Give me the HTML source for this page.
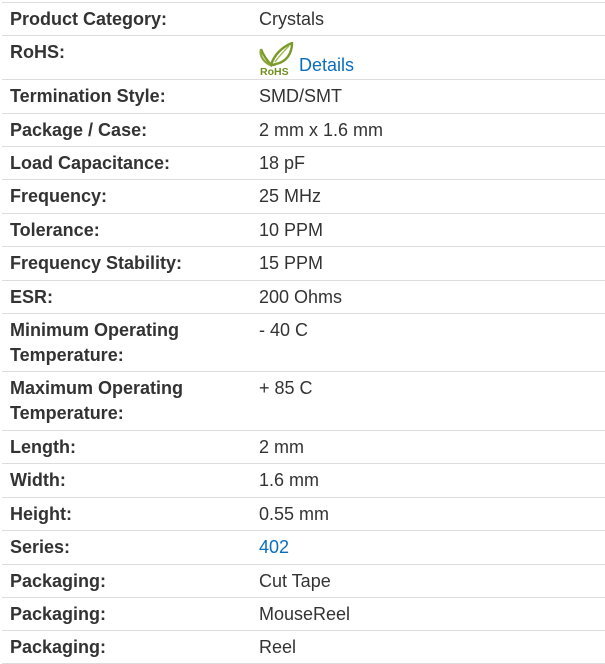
<!DOCTYPE html>
<html><head><meta charset="utf-8"><style>
body{margin:0;background:#fff;font-family:"Liberation Sans",Arial,sans-serif;font-size:18px;color:#333;}
.wrap{position:relative;width:605px;height:664px;}
.r{position:absolute;left:2px;right:0;border-top:1px solid #ddd;box-sizing:border-box;}
.l{position:absolute;left:8px;top:4px;line-height:25px;font-weight:bold;color:#333;width:240px;}
.v{position:absolute;left:257px;top:4px;line-height:25px;}
a{color:#0a6ebd;text-decoration:none;}
</style></head><body><div class="wrap">
<div class="r" style="top:2px;height:33px"><div class="l">Product Category:</div><div class="v">Crystals</div></div>
<div class="r" style="top:35px;height:44px"><div class="l">RoHS:</div>
<div style="position:absolute;left:256px;top:6px;width:36px;height:34px">
<svg width="36" height="34" viewBox="0 0 36 34"><path d="M3 7 C5 13 9 18 13 23 C16 13 24 5 34 1 C34 12 28 20 18 22 C16 23 14 23 13 23" fill="none" stroke="#7a9a2a" stroke-width="2.4"/><path d="M3 7 C1 14 6 20 12 23" fill="none" stroke="#8aa63a" stroke-width="2.2"/><path d="M17 20 C22 13 27 8 31 4" fill="none" stroke="#9bb84a" stroke-width="1.3"/><text x="2" y="33" font-family="Liberation Sans,sans-serif" font-weight="bold" font-size="10.5" fill="#6f8f1f">RoHS</text></svg></div>
<div class="v" style="left:297px;top:17px"><a>Details</a></div></div>
<div class="r" style="top:79px;height:34px"><div class="l">Termination Style:</div><div class="v">SMD/SMT</div></div>
<div class="r" style="top:113px;height:33px"><div class="l">Package / Case:</div><div class="v">2 mm x 1.6 mm</div></div>
<div class="r" style="top:146px;height:33px"><div class="l">Load Capacitance:</div><div class="v">18 pF</div></div>
<div class="r" style="top:179px;height:34px"><div class="l">Frequency:</div><div class="v">25 MHz</div></div>
<div class="r" style="top:213px;height:33px"><div class="l">Tolerance:</div><div class="v">10 PPM</div></div>
<div class="r" style="top:246px;height:34px"><div class="l">Frequency Stability:</div><div class="v">15 PPM</div></div>
<div class="r" style="top:280px;height:33px"><div class="l">ESR:</div><div class="v">200 Ohms</div></div>
<div class="r" style="top:313px;height:58px"><div class="l">Minimum Operating<br>Temperature:</div><div class="v">- 40 C</div></div>
<div class="r" style="top:371px;height:59px"><div class="l">Maximum Operating<br>Temperature:</div><div class="v">+ 85 C</div></div>
<div class="r" style="top:430px;height:33px"><div class="l">Length:</div><div class="v">2 mm</div></div>
<div class="r" style="top:463px;height:34px"><div class="l">Width:</div><div class="v">1.6 mm</div></div>
<div class="r" style="top:497px;height:33px"><div class="l">Height:</div><div class="v">0.55 mm</div></div>
<div class="r" style="top:530px;height:34px"><div class="l">Series:</div><div class="v"><a>402</a></div></div>
<div class="r" style="top:564px;height:33px"><div class="l">Packaging:</div><div class="v">Cut Tape</div></div>
<div class="r" style="top:597px;height:33px"><div class="l">Packaging:</div><div class="v">MouseReel</div></div>
<div class="r" style="top:630px;height:34px;border-bottom:1px solid #ddd"><div class="l">Packaging:</div><div class="v">Reel</div></div>
</div></body></html>
